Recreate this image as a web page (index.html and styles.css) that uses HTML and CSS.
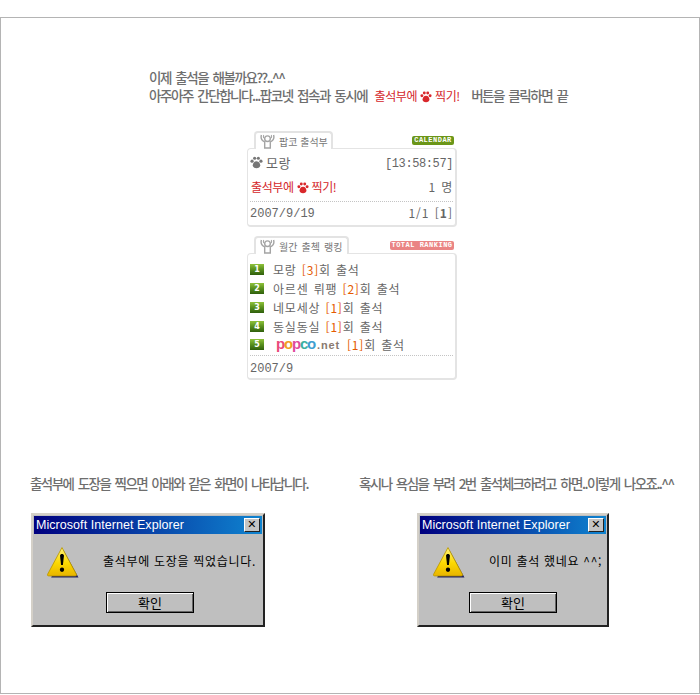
FILE: index.html
```html
<!DOCTYPE html>
<html lang="ko">
<head>
<meta charset="utf-8">
<title>팝코 출석부</title>
<link rel="stylesheet" href="styles.css">
</head>
<body>
<svg class="defs" width="0" height="0" aria-hidden="true">
  <defs>
    <symbol id="paw" viewBox="0 0 14 14">
      <circle cx="2.2" cy="5.6" r="1.7"/><circle cx="5" cy="2.4" r="1.7"/><circle cx="9" cy="2.4" r="1.7"/><circle cx="11.8" cy="5.6" r="1.7"/>
      <path d="M7 5.6c2.6 0 4 2.4 4 4.4 0 2.2-1.8 3.2-4 3.2s-4-1-4-3.2c0-2 1.4-4.4 4-4.4z"/>
    </symbol>
    <symbol id="cup" viewBox="0 0 16 16">
      <g fill="none" stroke="#a4a4a4" stroke-width="1.500">
        <circle cx="8" cy="5" r="3"/>
        <path d="M1.500 1c-1 3.500.5 6 3.500 7.500V15h6V8.500C14 7 15.500 4.500 14.500 1"/>
        <path d="M4 1c-.6 1.200-.5 2.400 0 3.400M12 1c.6 1.200.5 2.400 0 3.400" stroke-width="1.100"/>
      </g>
    </symbol>
    <symbol id="warn" viewBox="0 0 32 32">
      <defs>
        <linearGradient id="warn-fill" x1="0" y1="0" x2="0" y2="1">
          <stop offset="0" stop-color="#fff27a"/><stop offset=".55" stop-color="#fcd800"/><stop offset="1" stop-color="#e8b400"/>
        </linearGradient>
      </defs>
      <path d="M17 4 31.500 30.500H5z" fill="#23235e"/>
      <path d="M15.500 1.500 29.500 27.500c.4.9-.1 1.500-1 1.500H2.500c-.9 0-1.400-.6-1-1.500z" fill="url(#warn-fill)" stroke="#b89600" stroke-width=".8"/>
      <path d="M13.600 9.500c0-2.300 3.800-2.300 3.800 0l-1 9h-1.800z" fill="#000"/>
      <circle cx="15.500" cy="23" r="2.100" fill="#000"/>
    </symbol>
  </defs>
</svg>
<main class="frame">
  <section class="intro">
    <p>이제 출석을 해볼까요??..^^</p>
    <p>아주아주 간단합니다...팝코넷 접속과 동시에 <span class="stamp intro-stamp">출석부에 <svg class="paw paw-red"><use href="#paw"/></svg> 찍기!</span> 버튼을 클릭하면 끝</p>
  </section>

  <section class="widget widget-first">
    <header class="widget-head">
      <div class="tab"><svg class="cup"><use href="#cup"/></svg>팝코 출석부</div>
      <span class="label label-green">CALENDAR</span>
    </header>
    <div class="card">
      <div class="row row-who">
        <span class="who"><svg class="paw paw-grey"><use href="#paw"/></svg>모랑</span>
        <span class="mono mono-time">[13:58:57]</span>
      </div>
      <div class="row row-stamp">
        <span class="stamp">출석부에 <svg class="paw paw-red"><use href="#paw"/></svg> 찍기!</span>
        <span>1 명</span>
      </div>
      <div class="row row-foot">
        <span class="mono">2007/9/19</span>
        <span class="pages">1/1 [<b>1</b>]</span>
      </div>
    </div>
  </section>

  <section class="widget widget-second">
    <header class="widget-head">
      <div class="tab tab-wide"><svg class="cup"><use href="#cup"/></svg>월간 출첵 랭킹</div>
      <span class="label label-pink">TOTAL RANKING</span>
    </header>
    <div class="card">
      <ol class="rank">
        <li><span class="num">1</span>모랑 <em>[3]</em>회 출석</li>
        <li><span class="num">2</span>아르센 뤼팽 <em>[2]</em>회 출석</li>
        <li><span class="num">3</span>네모세상 <em>[1]</em>회 출석</li>
        <li><span class="num">4</span>동실동실 <em>[1]</em>회 출석</li>
        <li class="rank-last"><span class="num">5</span><span class="logo"><i class="c1">p</i><i class="c2">o</i><i class="c3">p</i><i class="c4">c</i><i class="c5">o</i><i class="c6">.net</i></span><em>[1]</em>회 출석</li>
      </ol>
      <div class="row row-foot row-month"><span class="mono">2007/9</span></div>
    </div>
  </section>

  <section class="results">
    <div class="result result-one">
      <h2>출석부에 도장을 찍으면 아래와 같은 화면이 나타납니다.</h2>
      <div class="dialog dialog-one">
        <div class="titlebar"><span>Microsoft Internet Explorer</span><span class="close">✕</span></div>
        <div class="dialog-body">
          <svg class="warn"><use href="#warn"/></svg>
          <p class="message">출석부에 도장을 찍었습니다.</p>
        </div>
        <div class="dialog-foot"><span class="ok">확인</span></div>
      </div>
    </div>
    <div class="result result-two">
      <h2>혹시나 욕심을 부려 2번 출석체크하려고 하면..이렇게 나오죠..^^</h2>
      <div class="dialog dialog-two">
        <div class="titlebar"><span>Microsoft Internet Explorer</span><span class="close">✕</span></div>
        <div class="dialog-body">
          <svg class="warn"><use href="#warn"/></svg>
          <p class="message">이미 출석 했네요 ^^;</p>
        </div>
        <div class="dialog-foot"><span class="ok">확인</span></div>
      </div>
    </div>
  </section>
</main>
</body>
</html>
```
FILE: styles.css
```css
* { box-sizing: border-box; margin: 0; padding: 0; }
html, body { background: #fff; }
body { font-family: "Noto Sans CJK KR", "Liberation Sans", sans-serif; color: #666; overflow: hidden; }
.defs { display: block; height: 0; }

.frame { margin-top: 17px; width: 700px; height: 677px; border: 1px solid #b4b4b4; padding-top: 50px; }

.intro { margin-left: 148px; font-size: 13.500px; line-height: 18px; letter-spacing: -1.450px; word-spacing: 2px; color: #6e6e6e; font-weight: 500; }
.intro p { white-space: nowrap; }
.stamp { color: #d4262a; font-size: 12px; font-weight: 400; letter-spacing: -.4px; word-spacing: 0; white-space: nowrap; }
.intro-stamp { margin: 0 7px 0 3px; }
.paw { display: inline-block; width: 12px; height: 12px; vertical-align: -2px; }
.paw-red { fill: #d9272b; }
.paw-grey { fill: #777; width: 13px; height: 13px; margin-right: 3px; }

.widget { margin-left: 246px; width: 210px; font-size: 12px; letter-spacing: .8px; word-spacing: 1px; color: #666; }
.widget-first { margin-top: 26px; }
.widget-second { margin-top: 9px; }
.widget-head { display: flex; justify-content: space-between; align-items: center; padding: 0 3px 0 7px; position: relative; z-index: 1; height: 18px; margin-bottom: -1px; }
.tab { width: 79px; height: 18px; display: flex; align-items: center; gap: 4px; padding-left: 4px; background: #fff; border: 2px solid #e3e3e3; border-bottom: 0; border-radius: 4px 4px 0 0; font-size: 10px; letter-spacing: 0; word-spacing: 0; color: #777; white-space: nowrap; }
.tab-wide { width: 95px; letter-spacing: .1px; word-spacing: 1px; }
.cup { width: 15px; height: 15px; flex: none; }
.label { height: 9px; display: flex; align-items: center; justify-content: center; border-radius: 2px; color: #fff; font-family: "Liberation Mono", monospace; font-size: 7px; font-weight: 700; letter-spacing: .5px; word-spacing: 0; white-space: nowrap; }
.label-green { width: 42px; background: #6b9618; }
.label-pink { width: 64px; background: #ea8484; }

.card { border: 2px solid #e4e4e4; border-width: 1px 2px 2px 1px; border-radius: 4px; padding: 0 2px; background: #fff; }
.widget-first .card { height: 79px; }
.widget-second .card { height: 127px; }
.row { display: flex; justify-content: space-between; align-items: center; white-space: nowrap; }
.row-who { height: 29px; font-size: 12px; }
.who { display: flex; align-items: center; font-size: 13px; letter-spacing: .5px; padding-bottom: 2px; }
.row-stamp { height: 23px; padding-left: 1px; padding-bottom: 7px; }
.row-stamp .stamp { font-size: 12px; }
.row-foot { border-top: 1px dotted #c4c4c4; height: 25px; padding-bottom: 1px; }
.row-month { height: 24px; padding-top: 3px; padding-bottom: 0; }
.mono { font-family: "Liberation Mono", monospace; font-size: 12px; letter-spacing: 0; word-spacing: 0; }
.mono-time { letter-spacing: -.4px; padding-top: 1px; }
.pages { letter-spacing: 1px; padding-bottom: 3px; }

.rank { list-style: none; padding-top: 6px; height: 101px; }
.rank li { height: 19px; display: flex; align-items: center; white-space: pre; line-height: 19px; }
.rank .rank-last { height: 15px; margin-top: 1px; }
.rank em { font-style: normal; color: #e45a00; }
.num { flex: none; width: 14px; height: 11px; margin-right: 9px; display: flex; align-items: center; justify-content: center; background: linear-gradient(#8fc23a 0, #5d9420 45%, #2f5f0c 100%); color: #fff; font: 700 8px/11px "DejaVu Sans", sans-serif; letter-spacing: 0; }
.logo { flex: none; width: 74px; padding-left: 3px; font-family: "Liberation Sans", sans-serif; font-weight: 700; font-size: 15px; letter-spacing: -1.200px; }
.logo i { font-style: normal; }
.c1 { color: #ea4a7a; } .c2 { color: #f2a01e; } .c3 { color: #e04a9c; } .c4 { color: #3ab0a0; } .c5 { color: #3f9ed0; } .c6 { color: #8a7a70; font-size: 11px; letter-spacing: .9px; margin-left: 2px; }

.results { display: flex; margin-top: 94px; }
.result h2 { font-size: 13.500px; line-height: 18px; font-weight: 500; letter-spacing: -1.550px; word-spacing: 2px; color: #6e6e6e; white-space: nowrap; height: 39px; }
.result-one { width: 358px; padding-left: 29px; }
.dialog-one { width: 234px; margin-left: 1px; }
.dialog-two { width: 192px; margin-left: 58px; }
.dialog { height: 114px; background: #bfbfbf; border: 2px solid; border-color: #d4d0c8 #222 #222 #d4d0c8; color: #000; padding: 1px; font-size: 12px; display: flex; flex-direction: column; }
.titlebar { height: 18px; flex: none; display: flex; justify-content: space-between; align-items: center; padding: 0 2px; background: linear-gradient(90deg, #00007f, #0f84d0); color: #fff; font: 400 12.500px/18px "Liberation Sans", sans-serif; letter-spacing: .05px; white-space: nowrap; }
.close { width: 16px; height: 14px; background: #c4c4c4; border: 1px solid; border-color: #fff #222 #222 #fff; color: #000; display: flex; align-items: center; justify-content: center; font: 700 11px/12px "DejaVu Sans", sans-serif; }
.dialog-body { display: flex; height: 52px; padding: 12px 0 0 12px; }
.warn { width: 33px; height: 33px; flex: none; }
.message { margin: 6px 0 0 24px; white-space: nowrap; letter-spacing: .7px; }
.dialog-foot { display: flex; padding-top: 6px; }
.dialog-one .dialog-foot { padding-left: 72px; }
.dialog-two .dialog-foot { padding-left: 49px; }
.ok { width: 88px; height: 21px; display: flex; align-items: center; justify-content: center; background: #bfbfbf; border: 1px solid #000; box-shadow: inset 1px 1px 0 #fff, inset -1px -1px 0 #666; font-size: 13px; color: #000; }
```
